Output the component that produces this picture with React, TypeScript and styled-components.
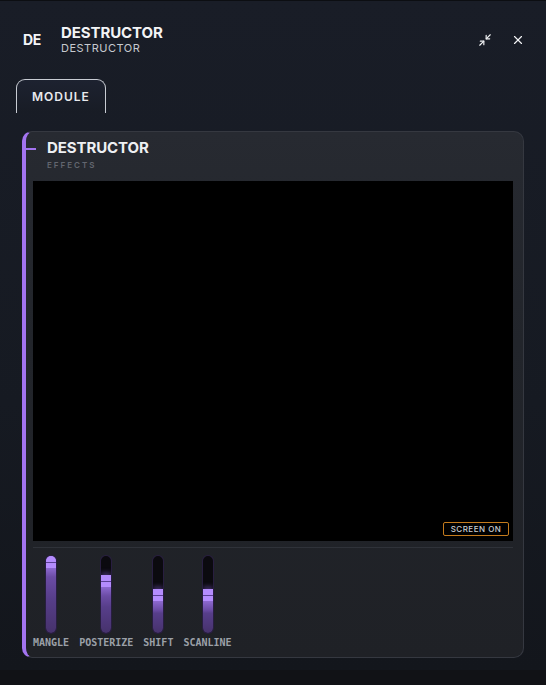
import React from "react";
import styled, { createGlobalStyle } from "styled-components";
import { Minimize2, X } from "lucide-react";

const GlobalStyle = createGlobalStyle`
  html, body {
    margin: 0;
    padding: 0;
    background: #111216;
  }
  body {
    font-family: Inter, "Noto Sans", "Liberation Sans", sans-serif;
    -webkit-font-smoothing: antialiased;
  }
  * { box-sizing: border-box; }
`;

const Panel = styled.div`
  display: flex;
  flex-direction: column;
  width: 546px;
  padding-bottom: 12px;
  border-top: 1px solid #0c0e12;
  background: linear-gradient(180deg, #191d27 0%, #161a22 60%, #13161c 100%);
`;

const Header = styled.header`
  display: flex;
  align-items: center;
  height: 29px;
  margin-top: 24px;
  padding: 0 14px;
`;

const Logo = styled.div`
  width: 36px;
  display: flex;
  justify-content: center;
  font-size: 14px;
  font-weight: 700;
  color: #f4f5f7;
  letter-spacing: -0.2px;
  margin-right: 11px;
`;

const TitleBlock = styled.div`
  flex: 1;
  display: flex;
  flex-direction: column;
`;

const Title = styled.div`
  font-size: 15px;
  line-height: 16px;
  font-weight: 700;
  color: #f3f4f6;
  letter-spacing: -0.1px;
`;

const Subtitle = styled.div`
  margin-top: 1px;
  font-size: 11px;
  line-height: 12px;
  font-weight: 400;
  color: #c6c9cf;
  letter-spacing: 0.5px;
`;

const Actions = styled.div`
  display: flex;
  gap: 5px;
`;

const IconButton = styled.button`
  width: 28px;
  height: 28px;
  display: flex;
  align-items: center;
  justify-content: center;
  padding: 0;
  border: none;
  background: transparent;
  color: #f2f3f5;
  cursor: pointer;
`;

const TabBar = styled.nav`
  display: flex;
  margin-top: 25px;
  padding-left: 16px;
`;

const Tab = styled.div`
  height: 34px;
  padding: 0 15px;
  display: flex;
  align-items: center;
  border: 1px solid #c8ccd3;
  border-bottom: none;
  border-radius: 9px 9px 0 0;
  background: linear-gradient(180deg, #1d2230 0%, #181c25 100%);
  font-size: 12px;
  font-weight: 600;
  letter-spacing: 1px;
  color: #e8eaee;
`;

const Card = styled.section`
  margin: 18px 22px 0 22px;
  padding: 7px 10px 9px 7px;
  border: 1px solid #353840;
  border-left: 4px solid #a374f0;
  border-radius: 10px;
  background: linear-gradient(180deg, #272a31 0%, #22252b 40%, #1f2126 100%);
`;

const CardHeader = styled.div`
  display: flex;
  align-items: flex-start;
  margin-left: -7px;
`;

const Tick = styled.div`
  width: 10px;
  height: 2px;
  margin-top: 9px;
  margin-right: 11px;
  background: #a374f0;
`;

const CardTitles = styled.div`
  display: flex;
  flex-direction: column;
`;

const CardTitle = styled.div`
  font-size: 15px;
  line-height: 18px;
  font-weight: 700;
  color: #eef0f3;
  letter-spacing: -0.1px;
`;

const CardKind = styled.div`
  margin-top: 3px;
  font-size: 8px;
  line-height: 10px;
  font-weight: 600;
  letter-spacing: 2px;
  color: #62666f;
`;

const Screen = styled.div`
  position: relative;
  width: 480px;
  height: 360px;
  margin-top: 11px;
  background: #000;
`;

const ScreenToggle = styled.button`
  position: absolute;
  right: 4px;
  bottom: 5px;
  width: 66px;
  height: 14px;
  padding: 0;
  display: flex;
  align-items: center;
  justify-content: center;
  border: 1px solid #c47b1d;
  border-radius: 2px;
  background: transparent;
  font-family: Inter, "Noto Sans", sans-serif;
  font-size: 8px;
  font-weight: 500;
  letter-spacing: 0.5px;
  color: #c9ccd1;
`;

const Divider = styled.div`
  width: 480px;
  height: 1px;
  margin-top: 6px;
  background: #2f3239;
`;

const Sliders = styled.div`
  display: flex;
  gap: 10px;
  margin-top: 7px;
`;

const SliderGroup = styled.div`
  display: flex;
  flex-direction: column;
  align-items: center;
`;

const Track = styled.div`
  width: 12px;
  height: 79px;
  display: flex;
  flex-direction: column;
  justify-content: flex-end;
  border-radius: 6px;
  overflow: hidden;
  background: #0b0a0f;
  border: 1px solid rgba(110, 78, 180, 0.3);
`;

const Fill = styled.div`
  display: flex;
  flex-direction: column;
  background: linear-gradient(
    180deg,
    #8d69d0 12px,
    #6b4ca5 21px,
    #573e8a 55%,
    #46326c 100%
  );
  box-shadow: 0 -3px 4px rgba(140, 100, 225, 0.35);
`;

const ThumbBar = styled.div<{ $h: number }>`
  height: ${(p) => p.$h}px;
  flex-shrink: 0;
  background: #b48cfd;
`;

const ThumbLine = styled.div`
  height: 1px;
  flex-shrink: 0;
  background: #5a4094;
`;

const SliderLabel = styled.div`
  margin-top: 3px;
  font-family: "DejaVu Sans Mono", "Liberation Mono", monospace;
  font-size: 10px;
  line-height: 11px;
  font-weight: 700;
  color: #9ba0a8;
`;

type Param = { label: string; value: number };

const params: Param[] = [
  { label: "MANGLE", value: 100 },
  { label: "POSTERIZE", value: 75 },
  { label: "SHIFT", value: 57 },
  { label: "SCANLINE", value: 57 },
];

function Slider({ label, value }: Param) {
  return (
    <SliderGroup>
      <Track>
        <Fill style={{ height: `${value}%` }}>
          <ThumbBar $h={6} />
          <ThumbLine />
          <ThumbBar $h={5} />
        </Fill>
      </Track>
      <SliderLabel>{label}</SliderLabel>
    </SliderGroup>
  );
}

export default function App() {
  return (
    <>
      <GlobalStyle />
      <Panel>
        <Header>
          <Logo>DE</Logo>
          <TitleBlock>
            <Title>DESTRUCTOR</Title>
            <Subtitle>DESTRUCTOR</Subtitle>
          </TitleBlock>
          <Actions>
            <IconButton aria-label="Minimize">
              <Minimize2 size={14} strokeWidth={2} />
            </IconButton>
            <IconButton aria-label="Close">
              <X size={14} strokeWidth={2} />
            </IconButton>
          </Actions>
        </Header>

        <TabBar>
          <Tab>MODULE</Tab>
        </TabBar>

        <Card>
          <CardHeader>
            <Tick />
            <CardTitles>
              <CardTitle>DESTRUCTOR</CardTitle>
              <CardKind>EFFECTS</CardKind>
            </CardTitles>
          </CardHeader>

          <Screen>
            <ScreenToggle>SCREEN ON</ScreenToggle>
          </Screen>

          <Divider />

          <Sliders>
            {params.map((p) => (
              <Slider key={p.label} {...p} />
            ))}
          </Sliders>
        </Card>
      </Panel>
    </>
  );
}
